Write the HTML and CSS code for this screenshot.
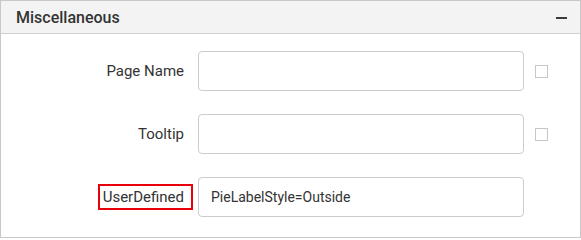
FILE: index.html
```html
<!DOCTYPE html>
<html>
<head>
<meta charset="utf-8">
<link rel="stylesheet" href="styles.css">
</head>
<body>
<div class="panel">
  <div class="panel-header">
    <span class="panel-title">Miscellaneous</span>
    <span class="collapse-icon"></span>
  </div>
  <div class="panel-body">
    <div class="row">
      <div class="label"><span>Page Name</span></div>
      <div class="field"></div>
      <div class="check"></div>
    </div>
    <div class="row">
      <div class="label"><span>Tooltip</span></div>
      <div class="field"></div>
      <div class="check"></div>
    </div>
    <div class="row">
      <div class="label"><span class="highlight">UserDefined</span></div>
      <div class="field">PieLabelStyle=Outside</div>
      <div class="check-space"></div>
    </div>
  </div>
</div>
</body>
</html>
```

FILE: styles.css
```css
html, body {
  margin: 0;
  padding: 0;
  background: #ffffff;
}

body {
  font-family: Roboto, "Liberation Sans", sans-serif;
  color: #333333;
}

.panel {
  width: 581px;
  height: 238px;
  box-sizing: border-box;
  border: 1px solid #c8c8c8;
  background: #ffffff;
}

.panel-header {
  height: 32px;
  background: #f3f3f3;
  border-bottom: 1px solid #cfcfcf;
  display: flex;
  align-items: center;
  justify-content: space-between;
  padding: 0 13px 0 15px;
}

.panel-title {
  font-size: 16px;
  font-weight: 500;
  color: #333333;
  line-height: 20px;
  padding-top: 1px;
}

.collapse-icon {
  width: 11px;
  height: 2px;
  background: #3a3a3a;
  margin-top: 1px;
}

.panel-body {
  padding-top: 17px;
  display: flex;
  flex-direction: column;
  gap: 23px;
}

.row {
  display: flex;
  align-items: center;
  height: 40px;
}

.label {
  width: 183px;
  text-align: right;
  font-size: 15px;
  line-height: 22px;
  color: #333333;
  flex: none;
}

.highlight {
  display: inline-block;
  border: 2px solid #e8000b;
  padding: 1px 7px 1px 3px;
  margin-right: -9px;
  line-height: 20px;
}

.field {
  margin-left: 14px;
  width: 326px;
  height: 40px;
  box-sizing: border-box;
  border: 1px solid #cccccc;
  border-radius: 4px;
  padding: 0 12px;
  font-size: 14px;
  line-height: 38px;
  color: #333333;
  flex: none;
}

.check {
  margin-left: 11px;
  width: 13px;
  height: 13px;
  box-sizing: border-box;
  border: 1px solid #c6c6c6;
  flex: none;
}

.check-space {
  width: 13px;
  margin-left: 11px;
}
```
